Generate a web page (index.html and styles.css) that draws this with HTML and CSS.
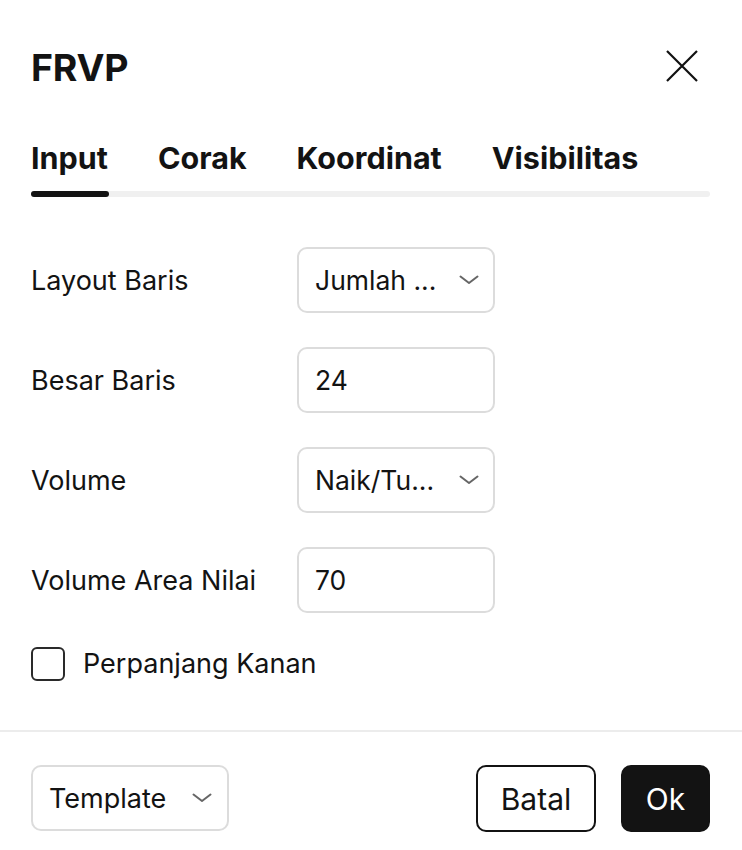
FILE: index.html
```html
<!DOCTYPE html>
<html lang="id">
<head>
<meta charset="utf-8">
<title>FRVP</title>
<link rel="stylesheet" href="styles.css">
</head>
<body>
<div class="dialog">
  <div class="header">
    <h1 class="title">FRVP</h1>
    <button class="close" aria-label="Tutup">
      <svg width="32" height="32" viewBox="0 0 32 32"><path d="M1 1 L31 31 M31 1 L1 31" stroke="#111" stroke-width="2.2" fill="none"/></svg>
    </button>
  </div>
  <div class="tabs">
    <div class="tab-list">
      <span class="tab active">Input</span>
      <span class="tab">Corak</span>
      <span class="tab">Koordinat</span>
      <span class="tab">Visibilitas</span>
    </div>
    <div class="track"><div class="indicator"></div></div>
  </div>
  <div class="body">
    <div class="row">
      <span class="label">Layout Baris</span>
      <div class="field select"><span>Jumlah ...</span><svg class="chev" width="20" height="10" viewBox="0 0 20 10"><path d="M1.5 1.5 L10 8 L18.5 1.5" stroke="#666" stroke-width="2" fill="none" stroke-linecap="round" stroke-linejoin="round"/></svg></div>
    </div>
    <div class="row">
      <span class="label">Besar Baris</span>
      <div class="field"><span>24</span></div>
    </div>
    <div class="row">
      <span class="label">Volume</span>
      <div class="field select"><span>Naik/Tu...</span><svg class="chev" width="20" height="10" viewBox="0 0 20 10"><path d="M1.5 1.5 L10 8 L18.5 1.5" stroke="#666" stroke-width="2" fill="none" stroke-linecap="round" stroke-linejoin="round"/></svg></div>
    </div>
    <div class="row">
      <span class="label">Volume Area Nilai</span>
      <div class="field"><span>70</span></div>
    </div>
    <label class="check-row">
      <span class="checkbox"></span>
      <span class="label">Perpanjang Kanan</span>
    </label>
  </div>
  <div class="footer">
    <div class="field select template"><span>Template</span><svg class="chev" width="20" height="10" viewBox="0 0 20 10"><path d="M1.5 1.5 L10 8 L18.5 1.5" stroke="#666" stroke-width="2" fill="none" stroke-linecap="round" stroke-linejoin="round"/></svg></div>
    <div class="actions">
      <button class="btn secondary">Batal</button>
      <button class="btn primary">Ok</button>
    </div>
  </div>
</div>
</body>
</html>
```
FILE: styles.css
```css
* { box-sizing: border-box; }
html, body { margin: 0; padding: 0; background: #fff; }
body { font-family: Inter, "Noto Sans", sans-serif; color: #131313; }
.dialog { width: 742px; height: 850px; display: flex; flex-direction: column; }
.header { display: flex; align-items: center; justify-content: space-between; padding: 46px 44px 0 31px; height: 90px; }
.title { margin: 0; font-size: 37.5px; line-height: 44px; font-weight: 700; letter-spacing: -0.2px; }
.close { border: 0; background: none; padding: 0; width: 32px; height: 32px; display: flex; margin-top: -4px; }
.tabs { padding: 50px 32px 0 31px; }
.tab-list { display: flex; gap: 50px; }
.tab { font-size: 30.5px; line-height: 36px; font-weight: 700; }
.track { margin-top: 15px; height: 6px; border-radius: 3px; background: #f0f0f0; }
.indicator { width: 78px; height: 6px; border-radius: 3px; background: #131313; }
.body { padding: 50px 32px 0 31px; display: flex; flex-direction: column; gap: 34px; }
.row { display: flex; align-items: center; height: 66px; }
.row .label { width: 266px; padding-top: 2px; }
.label { font-size: 27px; line-height: 32px; }
.field { width: 198px; height: 66px; border: 2px solid #dcdcdc; border-radius: 10px; display: flex; align-items: center; justify-content: space-between; padding: 0 14px 0 16px; font-size: 26.5px; }
.chev { flex: none; }
.check-row { display: flex; align-items: center; gap: 18px; height: 34px; }
.checkbox { width: 34px; height: 34px; border: 2px solid #2a2a2a; border-radius: 6px; }
.footer { margin-top: 49px; border-top: 2px solid #ececec; padding: 33px 32px 0 31px; display: flex; justify-content: space-between; }
.template { font-size: 27px; padding-left: 16px; padding-right: 15px; }
.actions { display: flex; gap: 25px; }
.btn { height: 67px; border-radius: 10px; font-family: Inter, "Noto Sans", sans-serif; font-size: 30px; padding: 0 22px; }
.secondary { background: #fff; border: 2px solid #131313; color: #131313; width: 120px; }
.primary { background: #131313; border: 2px solid #131313; color: #fff; width: 89px; }
```
